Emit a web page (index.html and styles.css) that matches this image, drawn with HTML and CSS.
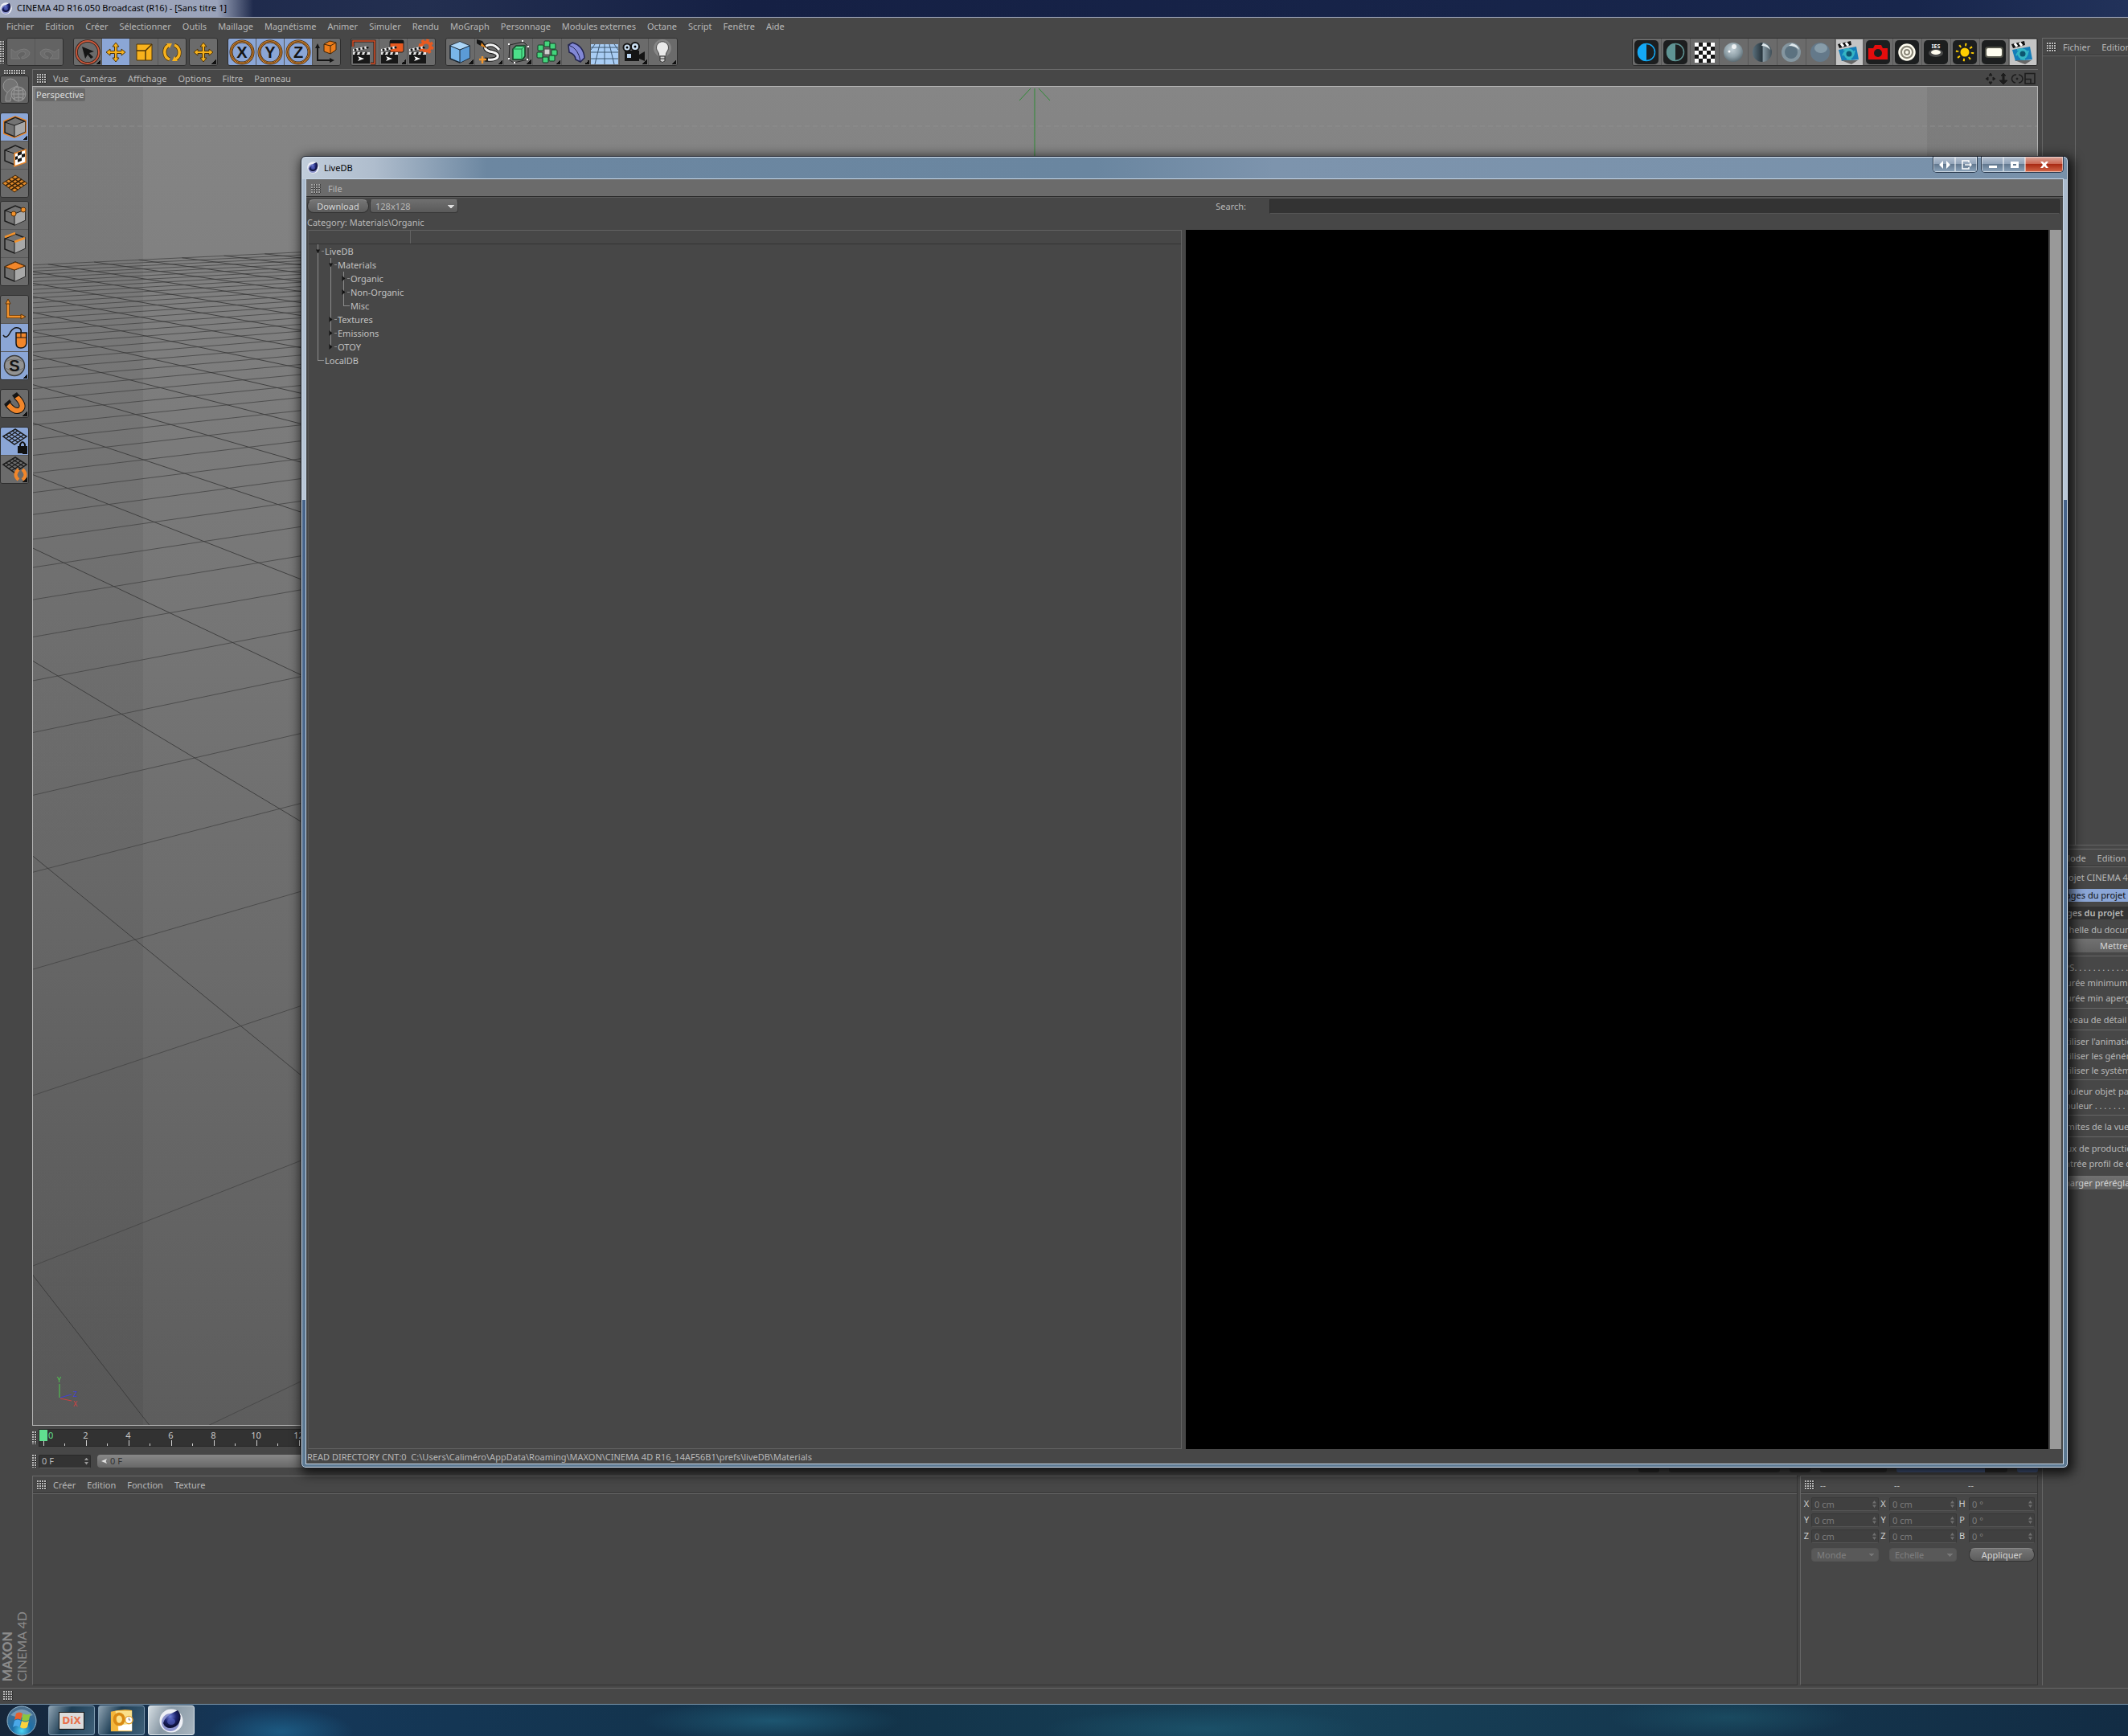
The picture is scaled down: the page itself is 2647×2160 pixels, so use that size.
FILE: index.html
```html
<!DOCTYPE html>
<html lang="fr">
<head>
    <meta charset="UTF-8">
    <meta name="viewport" content="width=device-width, initial-scale=1.0">
    <title>CINEMA 4D R16.050 Broadcast (R16) - [Sans titre 1]</title>
    <link rel="stylesheet" href="styles.css">
</head>
<body>
    <svg class="defs" aria-hidden="true">
        <defs>
            <radialGradient id="orbBlue" cx="40%" cy="35%" r="70%">
                <stop offset="0" stop-color="#6f7fd8"/><stop offset=".5" stop-color="#1d2470"/><stop offset="1" stop-color="#05061c"/>
            </radialGradient>
            <radialGradient id="ball" cx="45%" cy="35%" r="65%">
                <stop offset="0" stop-color="#c3d0d6"/><stop offset=".6" stop-color="#8fa0a8"/><stop offset="1" stop-color="#5c6c74"/>
            </radialGradient>
            <linearGradient id="metal" x1="0" y1="0" x2="1" y2="0">
                <stop offset="0" stop-color="#5b707c"/><stop offset=".5" stop-color="#27343c"/><stop offset=".55" stop-color="#8698a2"/><stop offset="1" stop-color="#3f4e57"/>
            </linearGradient>
            <radialGradient id="startOrb" cx="50%" cy="85%" r="80%">
                <stop offset="0" stop-color="#4fd6f5"/><stop offset=".4" stop-color="#1d6fa8"/><stop offset="1" stop-color="#4d6f8c"/>
            </radialGradient>
            <symbol id="c4d" viewBox="0 0 30 30">
                <circle cx="15" cy="15" r="14.500" fill="#eef0f6"/>
                <circle cx="14" cy="17" r="11" fill="#8c93cc"/>
                <path d="M5 18Q7 9 23 2Q29 8 25 17Q21 24 14 24Q7 24 5 18Z" fill="url(#orbBlue)"/>
                <ellipse cx="15" cy="16" rx="5" ry="4" fill="#5a68c4" opacity=".6"/>
            </symbol>
            <symbol id="undo" viewBox="0 0 34 34"><path d="M5 13V25H16L12 21Q17 14 22 17Q24 21 18 23V25Q28 24 28 17Q23 9 10 17Z" fill="#6d6d6d" stroke="#7a7a7a"/></symbol>
            <symbol id="redo" viewBox="0 0 34 34"><path d="M29 13V25H18L22 21Q17 14 12 17Q10 21 16 23V25Q6 24 6 17Q11 9 24 17Z" fill="#6d6d6d" stroke="#7a7a7a"/></symbol>
            <symbol id="select" viewBox="0 0 34 34">
                <circle cx="17" cy="17" r="14" fill="none" stroke="#2a1a14" stroke-width="3.500"/><circle cx="17" cy="17" r="14" fill="none" stroke="#c8583c" stroke-width="2"/>
                <path d="M10 10L25 16L19 18L24 23L21 25L17 20L14 25Z" fill="#151515"/>
            </symbol>
            <symbol id="move" viewBox="0 0 34 34"><path d="M17 5L21 10H18.500V15.500H24V13L29 17L24 21V18.500H18.500V24H21L17 29L13 24H15.500V18.500H10V21L5 17L10 13V15.500H15.500V10H13Z" fill="#f8b21c" stroke="#4d3408"/></symbol>
            <symbol id="scale" viewBox="0 0 34 34"><path d="M8 7H27V27H8Z" fill="#f8b21c" stroke="#4d3408"/><path d="M8 15H19V27M19 15L27 7" fill="none" stroke="#4d3408" stroke-width="1.500"/></symbol>
            <symbol id="rotate" viewBox="0 0 34 34"><g fill="none"><path d="M14 26A10 10 0 0 1 13 8M20 8A10 10 0 0 1 21 26" stroke="#4d3408" stroke-width="5"/><path d="M14 26A10 10 0 0 1 13 8M20 8A10 10 0 0 1 21 26" stroke="#f8b21c" stroke-width="3.500"/></g><path d="M10 6L17 6L14 12ZM24 28L17 28L20 22Z" fill="#f8b21c"/></symbol>
            <symbol id="ring" viewBox="0 0 34 34"><circle cx="17" cy="17" r="13.500" fill="none" stroke="#3a2208" stroke-width="4"/><circle cx="17" cy="17" r="13.500" fill="none" stroke="#d58a36" stroke-width="2.500"/><circle cx="17" cy="17" r="13.500" fill="none" stroke="#4a2a0a" stroke-width=".8"/></symbol>
            <symbol id="coord" viewBox="0 0 34 34"><path d="M6 10V27H23" fill="none" stroke="#151515" stroke-width="2"/><path d="M3 12L6 6L9 12ZM21 24L27 27L21 30Z" fill="#151515"/><path d="M14 7L21 3L29 5V14L22 19L14 16Z" fill="#ee7d1b" stroke="#3a2208"/><path d="M14 7L22 9V19M22 9L29 5" fill="none" stroke="#3a2208"/></symbol>
            <symbol id="clap" viewBox="0 0 34 34">
                <path d="M2 18H23V31H2Z" fill="#181818"/><path d="M2 13L21 9V12L2 16Z" fill="#f2f2f2"/><path d="M2 17H23V20H2Z" fill="#e8e8e8"/>
                <path d="M4 13L6 15M9 12L11 14M14 11L16 13M19 10L21 12M5 20L7 17M11 20L13 17M17 20L19 17" stroke="#111" stroke-width="2.500"/>
                <path d="M8 22L16 25L8 28L10 25Z" fill="#fff"/>
            </symbol>
            <symbol id="render" viewBox="0 0 34 34"><path d="M2 10V3H29V31H24" fill="none" stroke="#2a1208" stroke-width="3"/><path d="M2 10V3H29V31H24" fill="none" stroke="#d8532c" stroke-width="1.500"/><use href="#clap"/></symbol>
            <symbol id="renderPv" viewBox="0 0 34 34"><rect x="13" y="2" width="17" height="15" rx="2" fill="#e85a20" stroke="#222"/><rect x="13" y="2" width="17" height="4" fill="#151515"/><use href="#clap"/></symbol>
            <symbol id="renderSet" viewBox="0 0 34 34"><circle cx="23" cy="10" r="5.500" fill="none" stroke="#e85a20" stroke-width="4"/><circle cx="23" cy="10" r="8" fill="none" stroke="#e85a20" stroke-width="3" stroke-dasharray="3.500 2.780"/><use href="#clap"/></symbol>
            <symbol id="cubeBlue" viewBox="0 0 34 34"><path d="M5 9L17 4L29 9V24L17 30L5 25Z" fill="#79b6ea" stroke="#16222e" stroke-width="1.500"/><path d="M5 9L17 4L29 9L17 14Z" fill="#acd6f8"/><path d="M17 14L29 9V24L17 30Z" fill="#5b9bd6"/><path d="M5 9L17 14L29 9M17 14V30" fill="none" stroke="#16222e"/></symbol>
            <symbol id="spline" viewBox="0 0 34 34"><path d="M30 14Q23 5 14 9Q10 13 18 16Q30 18 28 23Q25 27 12 26" fill="none" stroke="#151515" stroke-width="5"/><path d="M30 14Q23 5 14 9Q10 13 18 16Q30 18 28 23Q25 27 16 26" fill="none" stroke="#f4f4f4" stroke-width="3"/><path d="M2 1L9 3L15 12L7 9L2 6Z" fill="#151515"/><path d="M8 5L14 12L7 9Z" fill="#e88a20"/><path d="M9 22V31M5 26H14" stroke="#f2962c" stroke-width="2.500"/></symbol>
            <symbol id="nurbs" viewBox="0 0 34 34"><path d="M7 8L24 4L30 10V26L12 30L6 26Z" fill="none" stroke="#222"/><path d="M11 13L15 9H26V22L23 26H11Z" fill="#4ce08a" stroke="#123a22" stroke-width="1.500"/><path d="M11 13H22V26M22 13L26 9" fill="none" stroke="#1f7a45"/><g fill="#fff"><rect x="5" y="6" width="2" height="2"/><rect x="22" y="2" width="2" height="2"/><rect x="29" y="9" width="2" height="2"/><rect x="5" y="24" width="2" height="2"/><rect x="12" y="29" width="2" height="2"/><rect x="28" y="25" width="2" height="2"/></g></symbol>
            <symbol id="array" viewBox="0 0 34 34"><g fill="#44d47c" stroke="#123a22"><rect x="14" y="3" width="7" height="7" rx="1"/><rect x="21" y="6" width="7" height="7" rx="1"/><rect x="23" y="14" width="7" height="7" rx="1"/><rect x="20" y="21" width="7" height="7" rx="1"/><rect x="12" y="23" width="7" height="7" rx="1"/><rect x="5" y="17" width="7" height="7" rx="1"/><rect x="6" y="8" width="7" height="7" rx="1"/></g><rect x="14" y="13" width="7" height="7" fill="#cfcfcf" stroke="#444"/></symbol>
            <symbol id="bend" viewBox="0 0 34 34"><path d="M8 8L13 5Q27 9 28 24L23 29L17 26Q17 20 9 17Z" fill="#8288d6" stroke="#22244e" stroke-width="1.500"/><path d="M8 8Q21 12 23 29" fill="none" stroke="#22244e"/></symbol>
            <symbol id="floor" viewBox="0 0 34 34"><path d="M0 7H34V32H0Z" fill="#a9cdf4"/><path d="M0 11H34M0 17H34M0 25H34M17 7V32M11 7L5 32M23 7L29 32M5 7L0 14M29 7L34 14" stroke="#3d566f" fill="none"/></symbol>
            <symbol id="camera" viewBox="0 0 34 34"><path d="M6 15H24V20L31 16V28L24 25V28H6Z" fill="#151515"/><circle cx="9" cy="11" r="4.500" fill="#cfe3f7" stroke="#151515" stroke-width="2"/><circle cx="19" cy="10" r="5" fill="#cfe3f7" stroke="#151515" stroke-width="2"/><circle cx="9" cy="11" r="1.500"/><circle cx="19" cy="10" r="1.500"/><rect x="9" y="19" width="5" height="5" fill="#bcd6f2"/></symbol>
            <symbol id="light" viewBox="0 0 34 34"><circle cx="17" cy="12" r="11" fill="#fff" opacity=".18"/><path d="M13 22Q13 18 10 14A7.500 7.500 0 1 1 24 14Q21 18 21 22Z" fill="#e9e9e9" stroke="#444"/><path d="M14 22H20V28Q17 31 14 28Z" fill="#cfcfcf" stroke="#333"/><path d="M14 25H20" stroke="#333"/></symbol>
            <symbol id="box" viewBox="0 0 34 34"><rect x="2" y="2" width="30" height="30" rx="5" fill="#1c1e1f"/></symbol>
            <symbol id="half" viewBox="0 0 34 34"><use href="#box"/><circle cx="17" cy="17" r="10.500" fill="none" stroke="currentColor" stroke-width="1.500"/><path d="M17 6A11 11 0 0 0 17 28Z" fill="currentColor"/></symbol>
            <symbol id="checker" viewBox="0 0 34 34"><rect x="5" y="5" width="25" height="25" fill="#161616"/><path d="M5 5h5v5H5zM15 5h5v5h-5zM25 5h5v5h-5zM10 10h5v5h-5zM20 10h5v5h-5zM5 15h5v5H5zM15 15h5v5h-5zM25 15h5v5h-5zM10 20h5v5h-5zM20 20h5v5h-5zM5 25h5v5H5zM15 25h5v5h-5zM25 25h5v5h-5z" fill="#fff"/></symbol>
            <symbol id="sphere1" viewBox="0 0 34 34"><circle cx="17" cy="17" r="12" fill="url(#ball)"/><circle cx="18" cy="10" r="3" fill="#fff" opacity=".8"/><circle cx="12" cy="16" r="1.500" fill="#fff"/></symbol>
            <symbol id="sphere2" viewBox="0 0 34 34"><circle cx="17" cy="17" r="12" fill="url(#metal)"/><path d="M18 6Q25 7 27 14Q22 9 16 9Z" fill="#dfe8ec"/></symbol>
            <symbol id="sphere3" viewBox="0 0 34 34"><circle cx="17" cy="17" r="12" fill="#8496a0"/><circle cx="17" cy="17" r="8" fill="#5c7280"/><path d="M18 6Q25 7 27 14Q22 9 14 9Z" fill="#dfe8ec"/></symbol>
            <symbol id="sphere4" viewBox="0 0 34 34"><circle cx="17" cy="17" r="12" fill="#64798a"/><ellipse cx="18" cy="12" rx="8" ry="6" fill="#90a5b0" opacity=".8"/></symbol>
            <symbol id="octane" viewBox="0 0 34 34"><path d="M1 1H34V33H1Z" fill="#c4c4c4"/><path d="M3 7L19 3L20 8L5 12Z" fill="#111"/><path d="M7 6L10 10M13 5L16 9" stroke="#fff" stroke-width="3"/><path d="M4 14L26 10L29 26L8 28Z" fill="#157db8"/><path d="M7 27L28 27L20 32Z" fill="#666"/><circle cx="17" cy="19" r="5" fill="#0d5570" stroke="#35b5c4" stroke-width="3"/><path d="M10 14L17 13M24 15L22 21M20 26L14 25M9 21L12 16" stroke="#35b5c4" stroke-width="2"/></symbol>
            <symbol id="photo" viewBox="0 0 34 34"><use href="#box"/><path d="M5 12H11L13 8H21L23 12H29V26H5Z" fill="#e50d0d"/><circle cx="17" cy="18" r="5" fill="#1c1e1f"/></symbol>
            <symbol id="target" viewBox="0 0 34 34"><use href="#box"/><circle cx="17" cy="17" r="9.500" fill="#8b887a" stroke="#fffdf0" stroke-width="2.500"/><circle cx="17" cy="17" r="5" fill="none" stroke="#fffdf0" stroke-width="2"/><circle cx="17" cy="17" r="2" fill="#fffdf0"/></symbol>
            <symbol id="ies" viewBox="0 0 34 34"><use href="#box"/><ellipse cx="17" cy="18" rx="9" ry="5" fill="#777" opacity=".5"/><ellipse cx="17" cy="17" rx="6" ry="3" fill="#fffdf0"/><text x="17" y="12" text-anchor="middle" class="ies-label">IES</text></symbol>
            <symbol id="sun" viewBox="0 0 34 34"><use href="#box"/><circle cx="17" cy="17" r="5.500" fill="#ffce00"/><circle cx="17" cy="17" r="9.500" fill="none" stroke="#ffce00" stroke-width="3.500" stroke-dasharray="2 5.460"/></symbol>
            <symbol id="area" viewBox="0 0 34 34"><use href="#box"/><rect x="6" y="10" width="23" height="14" rx="4" fill="#888774" opacity=".5"/><rect x="8" y="12" width="19" height="10" rx="2" fill="#fffdf0"/></symbol>
            <symbol id="globes" viewBox="0 0 34 34"><g fill="#747474" stroke="#999"><circle cx="12" cy="12" r="9"/><path d="M6 31Q4 18 20 12L22 18Q12 22 12 31Z"/><circle cx="22" cy="22" r="9"/><path d="M13 22H31M22 13V31M15 16Q22 20 29 16M15 28Q22 24 29 28M18 14Q14 22 18 30M26 14Q30 22 26 30" fill="none"/></g></symbol>
            <symbol id="cube" viewBox="0 0 34 34"><path d="M5 11L18 5L30 10V23L17 29L5 24Z" fill="#737373" stroke="#1b1b1b" stroke-width="1.500"/><path d="M17 15L30 10V23L17 29Z" fill="#a8a8a8"/><path d="M5 11L17 15L30 10M17 15V29" fill="none" stroke="#1b1b1b"/></symbol>
            <symbol id="model" viewBox="0 0 34 34"><path d="M4 10L18 4L31 9V24L17 30L4 25Z" fill="none" stroke="#e9862a" stroke-width="2"/><use href="#cube"/></symbol>
            <symbol id="texture" viewBox="0 0 34 34"><use href="#cube"/><path d="M17 15L31 10V26L17 31Z" fill="#fff" stroke="#e9862a" stroke-width="1.500"/><path d="M21 14L26 12V16L21 18ZM18 19L21 18V22L18 23ZM26 16L30 15V19L26 20ZM21 22L26 20V24L21 26Z" fill="#151515"/></symbol>
            <symbol id="plane" viewBox="0 0 34 34"><path d="M2 17L18 7L33 17L17 28Z" fill="#e08a2a" stroke="#3a2208"/><path d="M6 14.500L21 25M10 12L25 22.500M14 9.500L29 20M22 9.500L6 20M26 12L10 22.500M30 14.500L13 25" stroke="#3a2208" stroke-width="1.500"/></symbol>
            <symbol id="points" viewBox="0 0 34 34"><use href="#cube"/><g fill="#f2922c" stroke="#5a3208"><circle cx="16" cy="15" r="3"/><circle cx="28" cy="10" r="3"/></g></symbol>
            <symbol id="edges" viewBox="0 0 34 34"><use href="#cube"/><path d="M5 9L18 4M17 15L30 10" stroke="#f2922c" stroke-width="2.500"/></symbol>
            <symbol id="polys" viewBox="0 0 34 34"><use href="#cube"/><path d="M5 11L18 5L30 10L17 15Z" fill="#f2862a" stroke="#5a3208"/></symbol>
            <symbol id="axis" viewBox="0 0 34 34"><path d="M9 8V26H26" fill="none" stroke="#5a3208" stroke-width="4"/><path d="M9 8V26H26" fill="none" stroke="#f2922c" stroke-width="2.500"/><path d="M6 10L9 4L12 10ZM25 23L31 26L25 29Z" fill="#f2922c" stroke="#5a3208"/></symbol>
            <symbol id="mouse" viewBox="0 0 34 34"><path d="M3 14Q7 20 12 10Q17 2 24 6Q26 8 25 11" fill="none" stroke="#151515" stroke-width="1.500"/><path d="M19 11H32V24Q31 30 25 30Q19 30 19 24Z" fill="#f2862a" stroke="#151515" stroke-width="1.500"/><path d="M19 17H32M25 11V17" stroke="#151515"/></symbol>
            <symbol id="disc" viewBox="0 0 34 34"><circle cx="17" cy="17" r="12.500" fill="#929292" stroke="#3a3a3a" stroke-width="1.500"/><path d="M6 12Q17 6 28 12M5 20Q17 26 29 20" fill="none" stroke="#6f6f6f"/></symbol>
            <symbol id="magnet" viewBox="0 0 34 34"><path d="M8 17Q17 29 24 25Q31 20 19 8" fill="none" stroke="#151515" stroke-width="8"/><path d="M8 17Q17 29 24 25Q31 20 19 8" fill="none" stroke="#f2862a" stroke-width="6"/><path d="M4 18L11 12L13 15L7 21ZM14 7L20 3L23 7L17 11Z" fill="#151515"/></symbol>
            <symbol id="net" viewBox="0 0 34 34"><path d="M3 11L18 2L32 11L17 21Z" fill="none" stroke="#1b1b1b" stroke-width="1.500"/><path d="M6.500 9L21 18M10 6.500L25 16M14 4L28.500 13.500M21 4L6.500 13.500M25 6.500L10 16M28.500 9L13.500 18.500" stroke="#1b1b1b" stroke-width="1.200"/></symbol>
            <symbol id="netLock" viewBox="0 0 34 34"><use href="#net"/><path d="M24 24V21Q27 15 30 21V24" fill="none" stroke="#111" stroke-width="2"/><rect x="21" y="23" width="12" height="9" fill="#111"/></symbol>
            <symbol id="netRot" viewBox="0 0 34 34"><use href="#net"/><path d="M22 30Q15 24 22 17M27 17Q34 24 27 30" fill="none" stroke="#f2862a" stroke-width="4"/></symbol>
        </defs>
    </svg>

    <header class="titlebar">
        <svg class="app-icon"><use href="#c4d"/></svg>
        <h1>CINEMA 4D R16.050 Broadcast (R16) - [Sans titre 1]</h1>
    </header>

    <nav class="menubar">
        <a href="#">Fichier</a><a href="#">Edition</a><a href="#">Créer</a><a href="#">Sélectionner</a><a href="#">Outils</a><a href="#">Maillage</a><a href="#">Magnétisme</a><a href="#">Animer</a><a href="#">Simuler</a><a href="#">Rendu</a><a href="#">MoGraph</a><a href="#">Personnage</a><a href="#">Modules externes</a><a href="#">Octane</a><a href="#">Script</a><a href="#">Fenêtre</a><a href="#">Aide</a>
    </nav>

    <div class="workspace">
        <div class="main">
            <div class="toolbar">
                <span class="grip tall"></span>
                <div class="tools faded">
                    <button class="tool"><svg><use href="#undo"/></svg></button>
                    <button class="tool"><svg><use href="#redo"/></svg></button>
                </div>
                <div class="tools spaced">
                    <button class="tool more"><svg><use href="#select"/></svg></button>
                    <button class="tool on"><svg><use href="#move"/></svg></button>
                    <button class="tool"><svg><use href="#scale"/></svg></button>
                    <button class="tool"><svg><use href="#rotate"/></svg></button>
                </div>
                <div class="tools near">
                    <button class="tool more"><svg><use href="#move"/></svg></button>
                </div>
                <div class="tools spaced">
                    <button class="tool on letter"><svg><use href="#ring"/><text x="17" y="24">X</text></svg></button>
                    <button class="tool on letter"><svg><use href="#ring"/><text x="17" y="24">Y</text></svg></button>
                    <button class="tool on letter"><svg><use href="#ring"/><text x="17" y="24">Z</text></svg></button>
                    <button class="tool"><svg><use href="#coord"/></svg></button>
                </div>
                <div class="tools spaced">
                    <button class="tool"><svg><use href="#render"/></svg></button>
                    <button class="tool more"><svg><use href="#renderPv"/></svg></button>
                    <button class="tool"><svg><use href="#renderSet"/></svg></button>
                </div>
                <div class="tools wide spaced">
                    <button class="tool more"><svg><use href="#cubeBlue"/></svg></button>
                    <button class="tool more"><svg><use href="#spline"/></svg></button>
                    <button class="tool more"><svg><use href="#nurbs"/></svg></button>
                    <button class="tool more"><svg><use href="#array"/></svg></button>
                    <button class="tool more"><svg><use href="#bend"/></svg></button>
                    <button class="tool more"><svg><use href="#floor"/></svg></button>
                    <button class="tool more"><svg><use href="#camera"/></svg></button>
                    <button class="tool more"><svg><use href="#light"/></svg></button>
                </div>
                <div class="tools wide octane">
                    <button class="tool cyan"><svg><use href="#half"/></svg></button>
                    <button class="tool teal"><svg><use href="#half"/></svg></button>
                    <button class="tool"><svg><use href="#checker"/></svg></button>
                    <button class="tool"><svg><use href="#sphere1"/></svg></button>
                    <button class="tool"><svg><use href="#sphere2"/></svg></button>
                    <button class="tool"><svg><use href="#sphere3"/></svg></button>
                    <button class="tool"><svg><use href="#sphere4"/></svg></button>
                    <button class="tool"><svg><use href="#octane"/></svg></button>
                    <button class="tool"><svg><use href="#photo"/></svg></button>
                    <button class="tool"><svg><use href="#target"/></svg></button>
                    <button class="tool"><svg><use href="#ies"/></svg></button>
                    <button class="tool"><svg><use href="#sun"/></svg></button>
                    <button class="tool"><svg><use href="#area"/></svg></button>
                    <button class="tool"><svg><use href="#octane"/></svg></button>
                </div>
            </div>

            <div class="stage">
                <aside class="rail">
                    <span class="grip flat"></span>
                    <div class="tools faded">
                        <button class="tool"><svg><use href="#globes"/></svg></button>
                    </div>
                    <div class="tools spaced">
                        <button class="tool on more"><svg><use href="#model"/></svg></button>
                        <button class="tool"><svg><use href="#texture"/></svg></button>
                        <button class="tool"><svg><use href="#plane"/></svg></button>
                    </div>
                    <div class="tools near">
                        <button class="tool"><svg><use href="#points"/></svg></button>
                        <button class="tool"><svg><use href="#edges"/></svg></button>
                        <button class="tool"><svg><use href="#polys"/></svg></button>
                    </div>
                    <div class="tools spaced">
                        <button class="tool"><svg><use href="#axis"/></svg></button>
                        <button class="tool on"><svg><use href="#mouse"/></svg></button>
                        <button class="tool on more letter"><svg><use href="#disc"/><text x="17" y="24">S</text></svg></button>
                    </div>
                    <div class="tools spaced">
                        <button class="tool more"><svg><use href="#magnet"/></svg></button>
                    </div>
                    <div class="tools spaced">
                        <button class="tool on more"><svg><use href="#netLock"/></svg></button>
                        <button class="tool more"><svg><use href="#netRot"/></svg></button>
                    </div>
                    <div class="brand"><b>MAXON</b><span>CINEMA 4D</span></div>
                </aside>

                <div class="center">
                    <div class="view-bar">
                        <span class="grip"></span>
                        <a href="#">Vue</a><a href="#">Caméras</a><a href="#">Affichage</a><a href="#">Options</a><a href="#">Filtre</a><a href="#">Panneau</a>
                        <svg class="view-nav" width="66" height="16" fill="#1d1d1d" stroke="#1d1d1d">
                            <path d="M7 1L9 4H5ZM7 15L9 12H5ZM1 8L4 6V10ZM13 8L10 6V10ZM20 4L23 1L26 4ZM18 10H28L23 15ZM22 4H24V11H22Z"/>
                            <path d="M39 3A5 5 0 0 0 38 13M42 3A5 5 0 0 1 42 13M50 1.500H62V14H50ZM50 8.500H57V14" fill="none" stroke-width="1.500"/><circle cx="40" cy="8" r="1"/>
                        </svg>
                    </div>
                    <div class="viewport">
                        <svg class="scene">
                            <g transform="translate(-41 -108)">
                                <g id="grid"></g>
                                <path class="horizon" d="M41 157H4000"/>
                                <path class="cam-axis" d="M1287 110V400M1268 125L1282 110M1306 125L1292 110"/>
                                <path d="M74 1722V1739" stroke="#4fd04f"/><path d="M75 1739L89 1735" stroke="#4040d8"/><path d="M75 1740L89 1743" stroke="#d04040"/>
                                <g class="axis-label"><text x="71" y="1720" fill="#4fd04f">Y</text><text x="91" y="1738" fill="#4040d8">Z</text><text x="91" y="1750" fill="#d04040">X</text></g>
                            </g>
                        </svg>
                        <span class="view-name">Perspective</span>
                    </div>

                    <div class="timeline">
                        <div class="time-row">
                            <span class="grip thin"></span>
                            <div class="ruler"><i class="playhead"></i><span class="current">0</span><span>2</span><span>4</span><span>6</span><span>8</span><span>10</span><span>12</span></div>
                        </div>
                        <div class="time-row">
                            <span class="grip thin"></span>
                            <label class="field frame"><input type="text" value="0 F" aria-label="Image"><i class="spin"></i></label>
                            <div class="range"><i></i>0 F</div>
                        </div>
                        <div class="playback"><i class="one"></i><i class="five"></i><i class="one"></i><i class="three"></i><i class="blue"></i><i class="one blue"></i></div>
                    </div>

                    <div class="bottom">
                        <section class="materials">
                            <div class="panel-bar">
                                <span class="grip"></span>
                                <a href="#">Créer</a><a href="#">Edition</a><a href="#">Fonction</a><a href="#">Texture</a>
                            </div>
                        </section>
                        <section class="coords">
                            <div class="panel-bar heads"><span class="grip"></span><span>--</span><span>--</span><span>--</span></div>
                            <div class="coord-grid">
                                <label for="px">X</label><span class="field"><input id="px" value="0 cm" disabled><i class="spin"></i></span>
                                <label for="sx">X</label><span class="field"><input id="sx" value="0 cm" disabled><i class="spin"></i></span>
                                <label for="rh">H</label><span class="field"><input id="rh" value="0 °" disabled><i class="spin"></i></span>
                                <label for="py">Y</label><span class="field"><input id="py" value="0 cm" disabled><i class="spin"></i></span>
                                <label for="sy">Y</label><span class="field"><input id="sy" value="0 cm" disabled><i class="spin"></i></span>
                                <label for="rp">P</label><span class="field"><input id="rp" value="0 °" disabled><i class="spin"></i></span>
                                <label for="pz">Z</label><span class="field"><input id="pz" value="0 cm" disabled><i class="spin"></i></span>
                                <label for="sz">Z</label><span class="field"><input id="sz" value="0 cm" disabled><i class="spin"></i></span>
                                <label for="rb">B</label><span class="field"><input id="rb" value="0 °" disabled><i class="spin"></i></span>
                                <select class="drop in-a" disabled aria-label="Repère"><option>Monde</option></select>
                                <select class="drop in-b" disabled aria-label="Taille"><option>Echelle</option></select>
                                <button class="pill in-c">Appliquer</button>
                            </div>
                        </section>
                    </div>
                </div>
            </div>
        </div>

        <aside class="dock">
            <section class="objects">
                <div class="panel-bar"><span class="grip"></span><a href="#">Fichier</a><a href="#">Edition</a></div>
                <div class="object-list"></div>
            </section>
            <section class="attributes">
                <div class="panel-bar attr-bar"><a href="#">Mode</a><a href="#">Edition</a></div>
                <p class="attr project">Projet CINEMA 4D</p>
                <p class="attr tab">Réglages du projet</p>
                <p class="attr section">Réglages du projet</p>
                <p class="attr">Echelle du document</p>
                <button class="strip mid">Mettre à l'échelle</button>
                <div class="attr-group"><p class="attr">FPS. . . . . . . . . . . . . . .</p><p class="attr">Durée minimum. . .</p><p class="attr">Durée min aperçu</p></div>
                <div class="attr-group"><p class="attr">Niveau de détail</p></div>
                <div class="attr-group tight"><p class="attr">Utiliser l'animation</p><p class="attr">Utiliser les générateurs</p><p class="attr">Utiliser le système</p></div>
                <div class="attr-group tight"><p class="attr">Couleur objet par</p><p class="attr">Couleur . . . . . . .</p></div>
                <div class="attr-group"><p class="attr">Limites de la vue</p></div>
                <div class="attr-group"><p class="attr">Flux de production</p><p class="attr">Entrée profil de couleur</p></div>
                <button class="strip">Charger préréglage</button>
            </section>
        </aside>
    </div>

    <footer class="statusbar"><span class="grip"></span></footer>

    <div class="taskbar">
        <button class="start" aria-label="Démarrer">
            <svg viewBox="0 0 38 38"><circle cx="19" cy="19" r="18" fill="url(#startOrb)" stroke="#8fb4cc"/><path d="M5 12Q19 -2 33 12Q19 18 5 12Z" fill="#fff" opacity=".3"/><path d="M12 10Q16 7 20 10L18 18Q14 15 10 18Z" fill="#e8602c"/><path d="M21 10Q25 13 30 10L28 18Q24 21 19 18Z" fill="#8cc63e"/><path d="M10 19Q14 16 18 19L16 27Q12 24 8 27Z" fill="#4aa8e8"/><path d="M19 19Q24 22 28 19L26 27Q22 30 17 27Z" fill="#fbd23c"/></svg>
        </button>
        <button class="task"><span class="dix">DiX</span></button>
        <button class="task"><svg viewBox="0 0 32 32"><path d="M2 4Q16 0 30 2V30H2Z" fill="#f4b73c"/><path d="M8 3H30V29H12Z" fill="#fbe08a"/><path d="M12 22L30 20V29H12Z" fill="#fff"/><ellipse cx="13" cy="14" rx="6" ry="7" fill="none" stroke="#d98a14" stroke-width="4"/><circle cx="26" cy="15" r="5" fill="#fff" stroke="#e0a030" stroke-width="1.500"/><path d="M26 12V15H28" fill="none" stroke="#777"/></svg></button>
        <button class="task open"><svg viewBox="0 0 30 30"><use href="#c4d"/></svg></button>
    </div>

    <!-- floating LiveDB window -->
    <div class="window">
        <header class="window-title">
            <svg class="app-icon"><use href="#c4d"/></svg>
            <h2>LiveDB</h2>
            <div class="window-buttons">
                <div class="caps"><button><svg viewBox="0 0 20 12"><path d="M8 1V11L3 6ZM12 1V11L17 6Z"/></svg></button><button><svg viewBox="0 0 20 12"><path d="M13 3V1H5V11H13V9M8 6H15" fill="none" stroke="#fff" stroke-width="1.500"/><path d="M14 3L17 6L14 9Z"/></svg></button></div>
                <div class="caps"><button><svg viewBox="0 0 20 12"><path d="M5 7H15V10H5Z"/></svg></button><button><svg viewBox="0 0 20 12"><path d="M5 2H15V10H5ZM8 5V7H12V5Z" fill-rule="evenodd"/></svg></button><button class="close"><svg viewBox="0 0 20 12"><path d="M5 2H8L10 4L12 2H15L12 6L15 10H12L10 8L8 10H5L8 6Z"/></svg></button></div>
            </div>
        </header>
        <div class="window-body">
            <nav class="window-menu"><span class="grip dark"></span><a href="#">File</a></nav>
            <div class="db-bar">
                <button class="pill">Download</button>
                <select class="drop" aria-label="Preview size"><option>128x128</option></select>
                <label class="search" for="search">Search:</label>
                <input id="search" type="text">
            </div>
            <p class="category">Category: Materials\Organic</p>
            <div class="db-main">
                <div class="tree-panel">
                    <div class="tree-head"><span></span></div>
                    <ul class="tree">
                        <li><div class="node down">LiveDB</div>
                            <ul>
                                <li><div class="node down">Materials</div>
                                    <ul>
                                        <li><div class="node right">Organic</div></li>
                                        <li><div class="node right">Non-Organic</div></li>
                                        <li><div class="node">Misc</div></li>
                                    </ul>
                                </li>
                                <li><div class="node right">Textures</div></li>
                                <li><div class="node right">Emissions</div></li>
                                <li><div class="node right">OTOY</div></li>
                            </ul>
                        </li>
                        <li><div class="node">LocalDB</div></li>
                    </ul>
                </div>
                <div class="preview"></div>
                <div class="scroll"></div>
            </div>
            <p class="db-status">READ DIRECTORY CNT:0&nbsp; C:\Users\Caliméro\AppData\Roaming\MAXON\CINEMA 4D R16_14AF56B1\prefs\liveDB\Materials</p>
        </div>
    </div>

    <script>
        // Ground grid: both line families run to a vanishing point on the horizon
        const horizon = 157;
        const grid = document.getElementById('grid');

        function addLine(x1, y1, x2, y2, cls) {
            const line = document.createElementNS('http://www.w3.org/2000/svg', 'line');
            line.setAttribute('x1', x1);
            line.setAttribute('y1', y1);
            line.setAttribute('x2', x2);
            line.setAttribute('y2', y2);
            line.setAttribute('class', cls);
            grid.appendChild(line);
        }

        const right = 3650, left = -1070, start = 40, end = 420;
        for (let k = -13; k <= 29; k++) {
            const d = 1 / (0.002193 + 0.000124 * k);
            addLine(start, horizon + d, end, horizon + d * (right - end) / (right - start), 'across');
        }
        const far = 172.7 / (right - start);
        for (let k = 0; k < 26; k++) {
            const slope = 1 / (0.0007 + 0.000402 * k) / (start - left);
            const x = Math.max(start, (right * far + left * slope) / (slope + far));
            if (x < end) {
                addLine(x, horizon + slope * (x - left), end, horizon + slope * (end - left), 'deep');
            }
        }
    </script>
</body>
</html>
```

FILE: styles.css
```css
* {
    box-sizing: border-box;
}

body {
    margin: 0;
    height: 100vh;
    display: flex;
    flex-direction: column;
    overflow: hidden;
    position: relative;
    background: #474747;
    color: #b8b8b8;
    font-family: "Noto Sans", "Open Sans", sans-serif;
    font-size: 11px;
    line-height: 16px;
}

h1, h2, p, ul {
    margin: 0;
    padding: 0;
    font-size: 11px;
    font-weight: normal;
}

ul {
    list-style: none;
}

a {
    color: inherit;
    text-decoration: none;
}

button, input, select {
    font: inherit;
    color: inherit;
    margin: 0;
    padding: 0;
    border: 0;
}

.defs {
    position: absolute;
    width: 0;
    height: 0;
}

.ies-label {
    font-size: 7px;
    font-weight: bold;
    fill: #fff;
}

.grip {
    display: block;
    width: 12px;
    height: 12px;
    flex: none;
    background: radial-gradient(circle at 1px 1px, #bdbdbd 0 1px, #2b2b2b 1px 2px, transparent 2px) 0 0 / 3px 3px;
}

.grip.tall {
    width: 6px;
    height: 28px;
}

.grip.flat {
    width: 26px;
    height: 6px;
}

.grip.thin {
    width: 6px;
    height: 16px;
}

.grip.dark {
    opacity: 0.7;
}

/* title and menu */
.titlebar {
    height: 22px;
    flex: none;
    display: flex;
    align-items: center;
    gap: 6px;
    padding-bottom: 1px;
    border-bottom: 1px solid #a6aec4;
    background: linear-gradient(90deg, #a3abc0, #9aa3ba 270px, transparent 315px), linear-gradient(90deg, #1a2548, #232f50 20%, #152044 35%, #18264c 90%, #22325a);
    color: #000;
}

.app-icon {
    width: 15px;
    height: 15px;
}

.menubar {
    height: 25px;
    flex: none;
    display: flex;
    align-items: center;
    gap: 14px;
    padding-left: 8px;
    padding-bottom: 3px;
}

.workspace {
    flex: 1;
    min-height: 0;
    display: flex;
    gap: 5px;
}

.main {
    flex: 1;
    min-width: 0;
    display: flex;
    flex-direction: column;
}

.toolbar {
    height: 39px;
    flex: none;
    display: flex;
    align-items: center;
    padding-bottom: 4px;
}

.tools {
    display: flex;
    gap: 1px;
    flex: none;
    background: #575757;
    border: 1px solid #2e2e2e;
    border-radius: 3px;
    overflow: hidden;
}

.toolbar .faded {
    margin-left: 2px;
}

.toolbar .spaced {
    margin-left: 12px;
}

.toolbar .near {
    margin-left: 3px;
}

.toolbar .octane {
    margin-left: auto;
}

.tool {
    width: 34px;
    height: 33px;
    background: #6b6b6b;
}

.wide .tool {
    width: 35px;
}

.tool svg {
    width: 34px;
    height: 34px;
    display: block;
}

.tool.on {
    background-color: #8ba6d6;
}

.tool.more {
    background-image: linear-gradient(135deg, transparent 50%, #111 50%);
    background-size: 6px 6px;
    background-position: right 1px bottom 1px;
    background-repeat: no-repeat;
}

.faded .tool {
    background: #636363;
}

.letter text {
    font-family: "Liberation Sans", sans-serif;
    font-size: 20px;
    font-weight: bold;
    text-anchor: middle;
    fill: #151515;
}

.cyan {
    color: #14a8f4;
}

.teal {
    color: #5f9494;
}

/* left rail */
.stage {
    flex: 1;
    min-height: 0;
    display: flex;
}

.rail {
    width: 40px;
    flex: none;
    display: flex;
    flex-direction: column;
    align-items: flex-start;
}

.rail .grip {
    margin: 1px 0 1px 5px;
}

.rail .tools {
    flex-direction: column;
}

.rail .tool {
    height: 34px;
}

.rail .faded .tool {
    height: 33px;
}

.rail .spaced {
    margin-top: 11px;
}

.rail .near {
    margin-top: 4px;
}

.brand {
    margin-top: auto;
    padding-top: 5px;
    writing-mode: vertical-rl;
    transform: rotate(180deg);
    font-family: Lato, sans-serif;
    font-size: 16px;
    line-height: 18px;
    color: #8b8b8b;
}

.brand span, .brand b {
    display: block;
}

.brand b {
    font-weight: 900;
}

.center {
    flex: 1;
    min-width: 0;
    display: flex;
    flex-direction: column;
}

.view-bar, .panel-bar {
    height: 21px;
    flex: none;
    display: flex;
    align-items: center;
    gap: 14px;
    padding-left: 5px;
    border-top: 1px solid #6a6a6a;
    border-left: 1px solid #6a6a6a;
}

.view-bar {
    padding-top: 2px;
}

.grip + a {
    margin-left: -6px;
}

.view-nav {
    margin-left: auto;
}

.viewport {
    flex: 1;
    min-height: 0;
    position: relative;
    border: 1px solid #b4b4b4;
    background: linear-gradient(90deg, rgba(0, 0, 0, 0.06) 137px, transparent 137px calc(100% - 137px), rgba(0, 0, 0, 0.06) calc(100% - 137px)), linear-gradient(#868686, #5d5d5d);
    overflow: hidden;
}

.scene {
    position: absolute;
    inset: 0;
    width: 100%;
    height: 100%;
}

.across {
    stroke: #444;
    stroke-opacity: 0.8;
}

.deep {
    stroke: #3a3a3a;
    stroke-opacity: 0.9;
}

.horizon {
    stroke: #8e8e8e;
    stroke-dasharray: 6 4;
}

.cam-axis {
    fill: none;
    stroke: #2f8a35;
}

.axis-label {
    font-size: 9px;
}

.view-name {
    position: absolute;
    left: 3px;
    top: 2px;
    padding: 0 1px;
    border-radius: 2px;
    background: #696969;
    color: #dedede;
}

/* timeline */
.timeline {
    height: 62px;
    flex: none;
    display: flex;
    flex-direction: column;
    gap: 9px;
    padding-top: 4px;
    position: relative;
}

.time-row {
    display: flex;
    align-items: center;
    gap: 2px;
    height: 22px;
}

.time-row + .time-row {
    height: 18px;
}

.ruler {
    flex: 1;
    height: 22px;
    display: flex;
    line-height: 14px;
    color: #c8c8c8;
    border: 1px solid #272727;
    background: linear-gradient(90deg, #d0d0d0 1px, transparent 1px) 5px 13px / 53px 7px repeat-x, linear-gradient(90deg, #d0d0d0 1px, transparent 1px) 31px 17px / 53px 3px repeat-x, #323232;
}

.ruler span {
    width: 53px;
    text-align: center;
}

.ruler .current {
    width: 21px;
    padding-left: 1px;
    text-align: left;
    color: #60e090;
}

.playhead {
    width: 10px;
    height: 14px;
    background: #60e090;
}

.field {
    display: flex;
    align-items: center;
    height: 17px;
    background: #333;
    border: 1px solid #2a2a2a;
    border-bottom-color: #5b5b5b;
    border-radius: 2px;
    padding-right: 2px;
}

.field input {
    flex: 1;
    min-width: 0;
    background: none;
    padding-left: 3px;
}

.frame {
    width: 65px;
}

.spin {
    width: 5px;
    height: 9px;
    background: #999;
    clip-path: polygon(50% 0, 100% 40%, 0 40%, 0 60%, 100% 60%, 50% 100%, 0 60%, 0 40%);
}

.range {
    flex: 1;
    height: 16px;
    display: flex;
    align-items: center;
    gap: 4px;
    margin-left: 6px;
    padding-left: 5px;
    border-radius: 4px;
    background: linear-gradient(#888, #686868);
    color: #333;
}

.range i {
    width: 7px;
    height: 6px;
    background: #e0e0e0;
    clip-path: polygon(0 50%, 100% 0, 80% 50%, 100% 100%);
}

.playback {
    display: flex;
    justify-content: flex-end;
    gap: 12px;
    position: absolute;
    right: 0;
    bottom: 4px;
}

.playback i {
    width: 138px;
    height: 14px;
    border-radius: 3px;
    background: #303030;
}

.playback .three {
    width: 83px;
}

.playback .blue {
    background: linear-gradient(90deg, #4d628e 80%, #303030 80%);
}

.playback .one {
    width: 26px;
}

.playback .one.blue {
    background: #4d628e;
}

/* bottom panels */
.bottom {
    height: 261px;
    flex: none;
    display: flex;
    gap: 3px;
}

.panel-bar {
    height: 23px;
    border-bottom: 1px solid #666;
    box-shadow: inset 0 -1px #363636;
}

.materials, .coords {
    border-bottom: 1px solid #333;
    border-left: 1px solid #666;
    border-right: 1px solid #363636;
}

.materials {
    flex: 1;
}

.materials .panel-bar, .coords .panel-bar {
    border-left: 0;
}

.coords {
    width: 296px;
}

.heads {
    gap: 0;
}

.heads span + span {
    width: 92px;
    padding-left: 7px;
}

.coord-grid {
    display: grid;
    grid-template-columns: 10px 84px 13px 84px 15px 82px;
    row-gap: 3px;
    padding: 4px 3px;
    color: #cfcfcf;
}

.coord-grid label {
    text-align: center;
    padding-right: 2px;
}

.coord-grid .field {
    background: #404040;
    border-color: #383838;
    border-bottom-color: #545454;
}

.coord-grid input {
    color: #7c7c7c;
}

.coord-grid .spin {
    background: #707070;
}

.in-a, .in-b, .in-c {
    margin-top: 3px;
}

.in-a {
    grid-column: 2;
}

.in-b {
    grid-column: 4;
}

.in-c {
    grid-column: 6;
}

.drop {
    height: 17px;
    width: 110px;
    padding: 0 6px;
    appearance: none;
    border-radius: 4px;
    border: 1px solid #383838;
    border-top-color: #777;
    background: linear-gradient(45deg, transparent 50%, #ddd 50%) right 8px top 6px / 4px 4px no-repeat, linear-gradient(-45deg, transparent 50%, #ddd 50%) right 4px top 6px / 4px 4px no-repeat, linear-gradient(#6e6e6e, #5a5a5a);
    line-height: 15px;
}

.drop:disabled {
    width: auto;
    color: #808080;
    opacity: 1;
    border-color: #555;
    background: linear-gradient(45deg, transparent 50%, #777 50%) right 8px top 6px / 4px 4px no-repeat, linear-gradient(-45deg, transparent 50%, #777 50%) right 4px top 6px / 4px 4px no-repeat, #595959;
}

.pill {
    height: 17px;
    border-radius: 8px;
    border: 1px solid #333;
    border-top-color: #888;
    background: linear-gradient(#757575, #5c5c5c);
    color: #d6d6d6;
    line-height: 15px;
}

/* right dock */
.dock {
    width: 107px;
    flex: none;
    overflow: hidden;
    white-space: nowrap;
    display: flex;
    flex-direction: column;
    border-left: 1px solid #666;
}

.dock .panel-bar {
    border-left: 0;
}

.objects {
    height: 1005px;
    display: flex;
    flex-direction: column;
    border-bottom: 1px solid #666;
}

.object-list {
    flex: 1;
    width: 41px;
    border-right: 1px solid #666;
}

.attributes {
    margin-top: 4px;
    display: flex;
    flex-direction: column;
}

.dock .attr-bar {
    padding-left: 24px;
}

.attr {
    padding-left: 21px;
    height: 19px;
    line-height: 18px;
}

.project {
    margin-top: 4px;
    height: 23px;
}

.tab {
    height: 16px;
    padding-left: 6px;
    background: #8ba6d6;
    color: #111;
    line-height: 16px;
}

.section {
    margin-top: 6px;
    height: 16px;
    padding-left: 0;
    background: #333;
    font-weight: 600;
    line-height: 16px;
}

.section + .attr {
    margin-top: 4px;
    height: 20px;
}

.strip {
    height: 17px;
    flex: none;
    background: linear-gradient(#717171, #616161);
    color: #d6d6d6;
    text-align: left;
    padding-left: 20px;
    line-height: 15px;
}

.strip.mid {
    padding-left: 71px;
    margin-bottom: 4px;
}

.attr-group {
    border-top: 1px solid #666;
    padding: 5px 0 2px;
}

.tight .attr {
    height: 18px;
}

.attributes > .strip:last-child {
    margin-top: 3px;
}

/* status and task bar */
.statusbar {
    height: 20px;
    flex: none;
    margin-top: 3px;
    padding: 3px 4px;
    border-top: 1px solid #666;
}

.taskbar {
    height: 40px;
    flex: none;
    display: flex;
    gap: 4px;
    padding: 1px 0 1px 8px;
    border-top: 1px solid #7e97ab;
    background: radial-gradient(ellipse 90px 30px at 350px 34px, #1c5a82, transparent), radial-gradient(ellipse 160px 26px at 960px 20px, #1d5570, transparent), radial-gradient(ellipse 200px 26px at 1500px 30px, #1b5068, transparent), radial-gradient(ellipse 150px 26px at 2150px 16px, #1a4a60, transparent), linear-gradient(90deg, #16263a, #15385a 12%, #123248 40%, #174158 60%, #122c44);
}

.start {
    width: 38px;
    height: 38px;
    margin-right: 10px;
    background: none;
}

.task {
    width: 58px;
    display: flex;
    align-items: center;
    justify-content: center;
    border: 1px solid #7f9bb0;
    border-radius: 3px;
    background: linear-gradient(115deg, #8ea2b1, #1f3f56 40%, #3f6079);
}

.task svg {
    width: 30px;
    height: 30px;
}

.task.open {
    border-color: #dfe8ee;
    background: linear-gradient(115deg, #d5dde2, #8797a4 40%, #a9b6c0);
}

.dix {
    width: 32px;
    height: 22px;
    border: 1px solid #111;
    background: #dcdcdc;
    color: #e8704c;
    font-family: "DejaVu Sans", sans-serif;
    font-size: 12px;
    font-weight: bold;
    line-height: 21px;
}

/* LiveDB window */
.window {
    position: absolute;
    inset: 194px 74px 333px 374px;
    display: flex;
    flex-direction: column;
    padding: 0 5px 4px;
    border: 1px solid #171c26;
    border-radius: 6px;
    background: linear-gradient(90deg, #c1cddb, #afbdcd 90px, #6c87a1 230px, #6a86a0 45%, #7d94ad 55%, #7891aa) 0 0 / 100% 28px no-repeat, linear-gradient(#a9bacd, #b9c7d7 427px, #46638a 427px, #5d7992);
    box-shadow: inset 0 0 0 1px #dbe6f2, 3px 4px 14px 3px rgba(0, 0, 0, 0.75);
}

.window-title {
    height: 27px;
    flex: none;
    display: flex;
    align-items: center;
    gap: 6px;
    padding-left: 2px;
    color: #000;
}

.window-buttons {
    margin-left: auto;
    align-self: flex-start;
    display: flex;
    gap: 4px;
}

.caps {
    display: flex;
    border: 1px solid #2a3a4e;
    border-top: 0;
    border-radius: 0 0 5px 5px;
    overflow: hidden;
}

.caps button {
    width: 27px;
    height: 19px;
    padding: 3px;
    background: linear-gradient(#b6c3d2, #93a5ba 45%, #62788f 50%, #8ea6bd);
    box-shadow: inset 0 0 0 1px rgba(255, 255, 255, 0.5);
}

.caps svg {
    width: 20px;
    height: 12px;
    fill: #fff;
    display: block;
    margin: auto;
}

.caps .close {
    width: 47px;
    background: linear-gradient(#dba79c, #cb6a56 45%, #a92a14 50%, #d2694a);
}

.window-body {
    flex: 1;
    min-height: 0;
    display: flex;
    flex-direction: column;
    border: 1px solid #c6d6e6;
    background: #474747;
}

.window-menu {
    height: 22px;
    flex: none;
    display: flex;
    align-items: center;
    gap: 15px;
    padding: 2px 0 0 6px;
    background: #6b6b6b;
    border-bottom: 1px solid #2d2d2d;
}

.db-bar {
    height: 22px;
    flex: none;
    display: flex;
    align-items: center;
    gap: 1px;
    padding: 0 4px 0 1px;
    border-top: 1px solid #5c5c5c;
}

.db-bar .pill {
    width: 77px;
}

.search {
    flex: 1;
    text-align: right;
    padding-right: 28px;
}

.db-bar input {
    width: calc(45% + 2px);
    height: 18px;
    background: #333;
    border: 1px solid #2b2b2b;
    border-bottom-color: #555;
}

.category {
    height: 19px;
    flex: none;
    padding-left: 1px;
    line-height: 20px;
}

.db-main {
    flex: 1;
    min-height: 0;
    display: flex;
    gap: 2px;
    padding: 0 2px;
}

.tree-panel {
    flex: 1;
    margin-right: 3px;
    border: 1px solid #626262;
    border-left-color: #555;
}

.tree-head {
    height: 17px;
    border-bottom: 1px solid #333;
}

.tree-head span {
    display: block;
    width: 127px;
    height: 16px;
    border-right: 1px solid #626262;
}

.tree {
    margin-left: 3px;
    color: #c2c2c2;
}

.tree, .tree ul {
    background: linear-gradient(#8c8c8c, #8c8c8c) 8px 0 / 1px calc(100% - 8px) no-repeat;
}

.tree ul {
    margin-left: 16px;
}

.node {
    height: 17px;
    line-height: 17px;
    display: flex;
    align-items: center;
    background: linear-gradient(#8c8c8c, #8c8c8c) 8px 8px / 8px 1px no-repeat;
}

.node::before {
    content: "";
    width: 5px;
    height: 7px;
    margin: 0 6px;
}

.node.down, .node.right {
    background-position: 13px 8px;
    background-size: 3px 1px;
}

.node.down::before {
    background: #141414;
    clip-path: polygon(0 20%, 100% 20%, 50% 90%);
}

.node.right::before {
    background: #141414;
    clip-path: polygon(10% 0, 90% 50%, 10% 100%);
}

.preview {
    flex: 0 1 49.2%;
    background: #000;
}

.scroll {
    width: 14px;
    flex: none;
    background: #999;
}

.db-status {
    height: 18px;
    flex: none;
    line-height: 20px;
    padding-left: 1px;
}
```
